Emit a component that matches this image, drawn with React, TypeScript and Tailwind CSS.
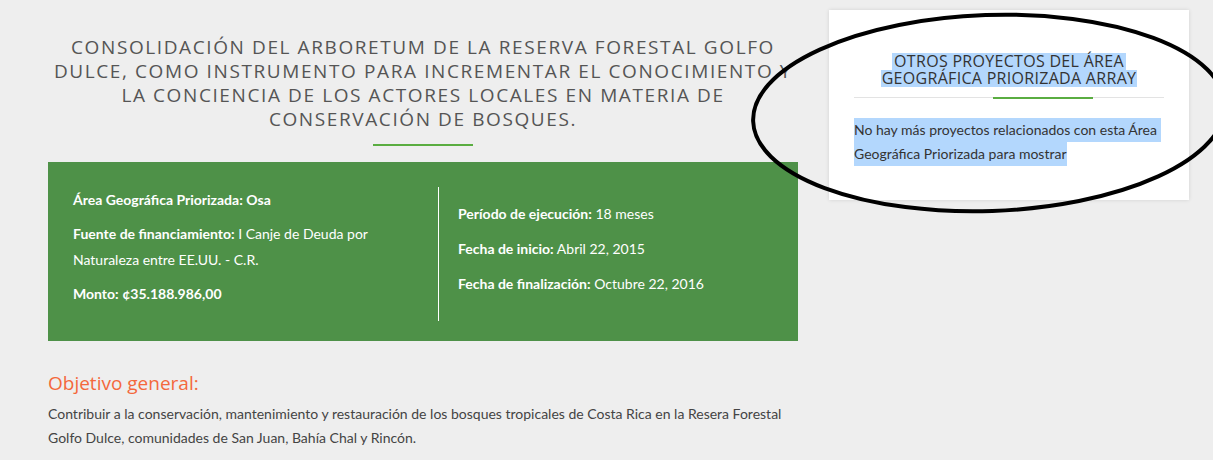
import React from 'react'

// Datos del proyecto
const leftItems = [
  { label: 'Área Geográfica Priorizada:', value: 'Osa', boldValue: true },
  { label: 'Fuente de financiamiento:', value: 'I Canje de Deuda por Naturaleza entre EE.UU. - C.R.' },
  { label: 'Monto:', value: '¢35.188.986,00', boldValue: true },
]

const rightItems = [
  { label: 'Período de ejecución:', value: '18 meses' },
  { label: 'Fecha de inicio:', value: 'Abril 22, 2015' },
  { label: 'Fecha de finalización:', value: 'Octubre 22, 2016' },
]

const heading = { fontFamily: '"Open Sans", "Noto Sans", sans-serif' }
const body = { fontFamily: 'Lato, "Liberation Sans", sans-serif' }

function InfoLine({ label, value, boldValue, gap }: { label: string, value: string, boldValue?: boolean, gap: string }) {
  return (
    <p className={`leading-[26px] text-[14px] text-white ${gap}`}>
      <strong className="font-bold">{label}</strong>{' '}
      <span className={boldValue ? 'font-bold' : ''}>{value}</span>
    </p>
  )
}

// Tarjeta lateral
function SideCard() {
  return (
    <div className="bg-white shadow-[0_0_4px_rgba(0,0,0,0.12)] px-[25px] pt-[43px] pb-[34px]">
      <h3 className="text-center text-[16px] leading-[17px] tracking-[0.3px] text-[#333]" style={heading}>
        <span className="inline-block bg-[#b3d7fd] px-[2px]">OTROS PROYECTOS DEL ÁREA</span>
        <br />
        <span className="inline-block bg-[#b3d7fd] px-[1px]">GEOGRÁFICA PRIORIZADA ARRAY</span>
      </h3>
      <div className="relative mt-[10px] h-[1px] bg-[#e3e3e3]">
        <div className="absolute left-[139px] top-0 h-[2px] w-[100px] bg-[#5aad41]" />
      </div>
      <p className="mt-[20px] text-[14px] leading-[24px] text-[#333]" style={body}>
        <span className="inline-block bg-[#b3d7fd] pr-[4px]">No hay más proyectos relacionados con esta Área</span>
        <br />
        <span className="inline-block bg-[#b3d7fd]">Geográfica Priorizada para mostrar</span>
      </p>
    </div>
  )
}

export default function App() {
  return (
    <div className="relative min-h-[460px] overflow-hidden bg-[#eeeeee]">
      <div className="flex gap-[31px] pl-[48px] pr-[25px] pt-[10px]">
        <main className="w-[750px] shrink-0">
          <h1
            className="mt-[25px] text-center text-[19px] leading-[24px] tracking-[1.6px] text-[#555]"
            style={heading}
          >
            CONSOLIDACIÓN DEL ARBORETUM DE LA RESERVA FORESTAL GOLFO DULCE, COMO INSTRUMENTO PARA INCREMENTAR EL CONOCIMIENTO Y LA CONCIENCIA DE LOS ACTORES LOCALES EN MATERIA DE CONSERVACIÓN DE BOSQUES.
          </h1>
          <div className="mx-auto mt-[13px] h-[2px] w-[100px] bg-[#5aad41]" />

          {/* caja verde */}
          <div className="mt-[16px] bg-[#4e9148] px-[25px] pt-[25px] pb-[20px]" style={body}>
            <div className="flex">
              <div className="w-[365px] pr-[15px] pb-[14px]">
                {leftItems.map((it, i) => (
                  <InfoLine key={it.label} {...it} gap={i === leftItems.length - 1 ? '' : 'mb-[8px]'} />
                ))}
              </div>
              <div className="border-l border-white pl-[19px] pt-[14px]">
                {rightItems.map((it, i) => (
                  <InfoLine key={it.label} {...it} gap={i === rightItems.length - 1 ? '' : 'mb-[9px]'} />
                ))}
              </div>
            </div>
          </div>

          <h2 className="mt-[30px] text-[19px] leading-[24px] text-[#f4683c]" style={heading}>
            Objetivo general:
          </h2>
          <p className="mt-[7px] text-[14px] leading-[24px] text-[#444]" style={body}>
            Contribuir a la conservación, mantenimiento y restauración de los bosques tropicales de Costa Rica en la Resera Forestal Golfo Dulce, comunidades de San Juan, Bahía Chal y Rincón.
          </p>
        </main>

        <aside className="w-[360px] shrink-0">
          <SideCard />
        </aside>
      </div>

      {/* marca a mano sobre la captura */}
      <svg className="pointer-events-none absolute inset-0" width="1213" height="460" viewBox="0 0 1213 460">
        <ellipse cx="989" cy="113" rx="236" ry="98" fill="none" stroke="#000" strokeWidth="4" transform="rotate(-2 989 113)" />
      </svg>
    </div>
  )
}
